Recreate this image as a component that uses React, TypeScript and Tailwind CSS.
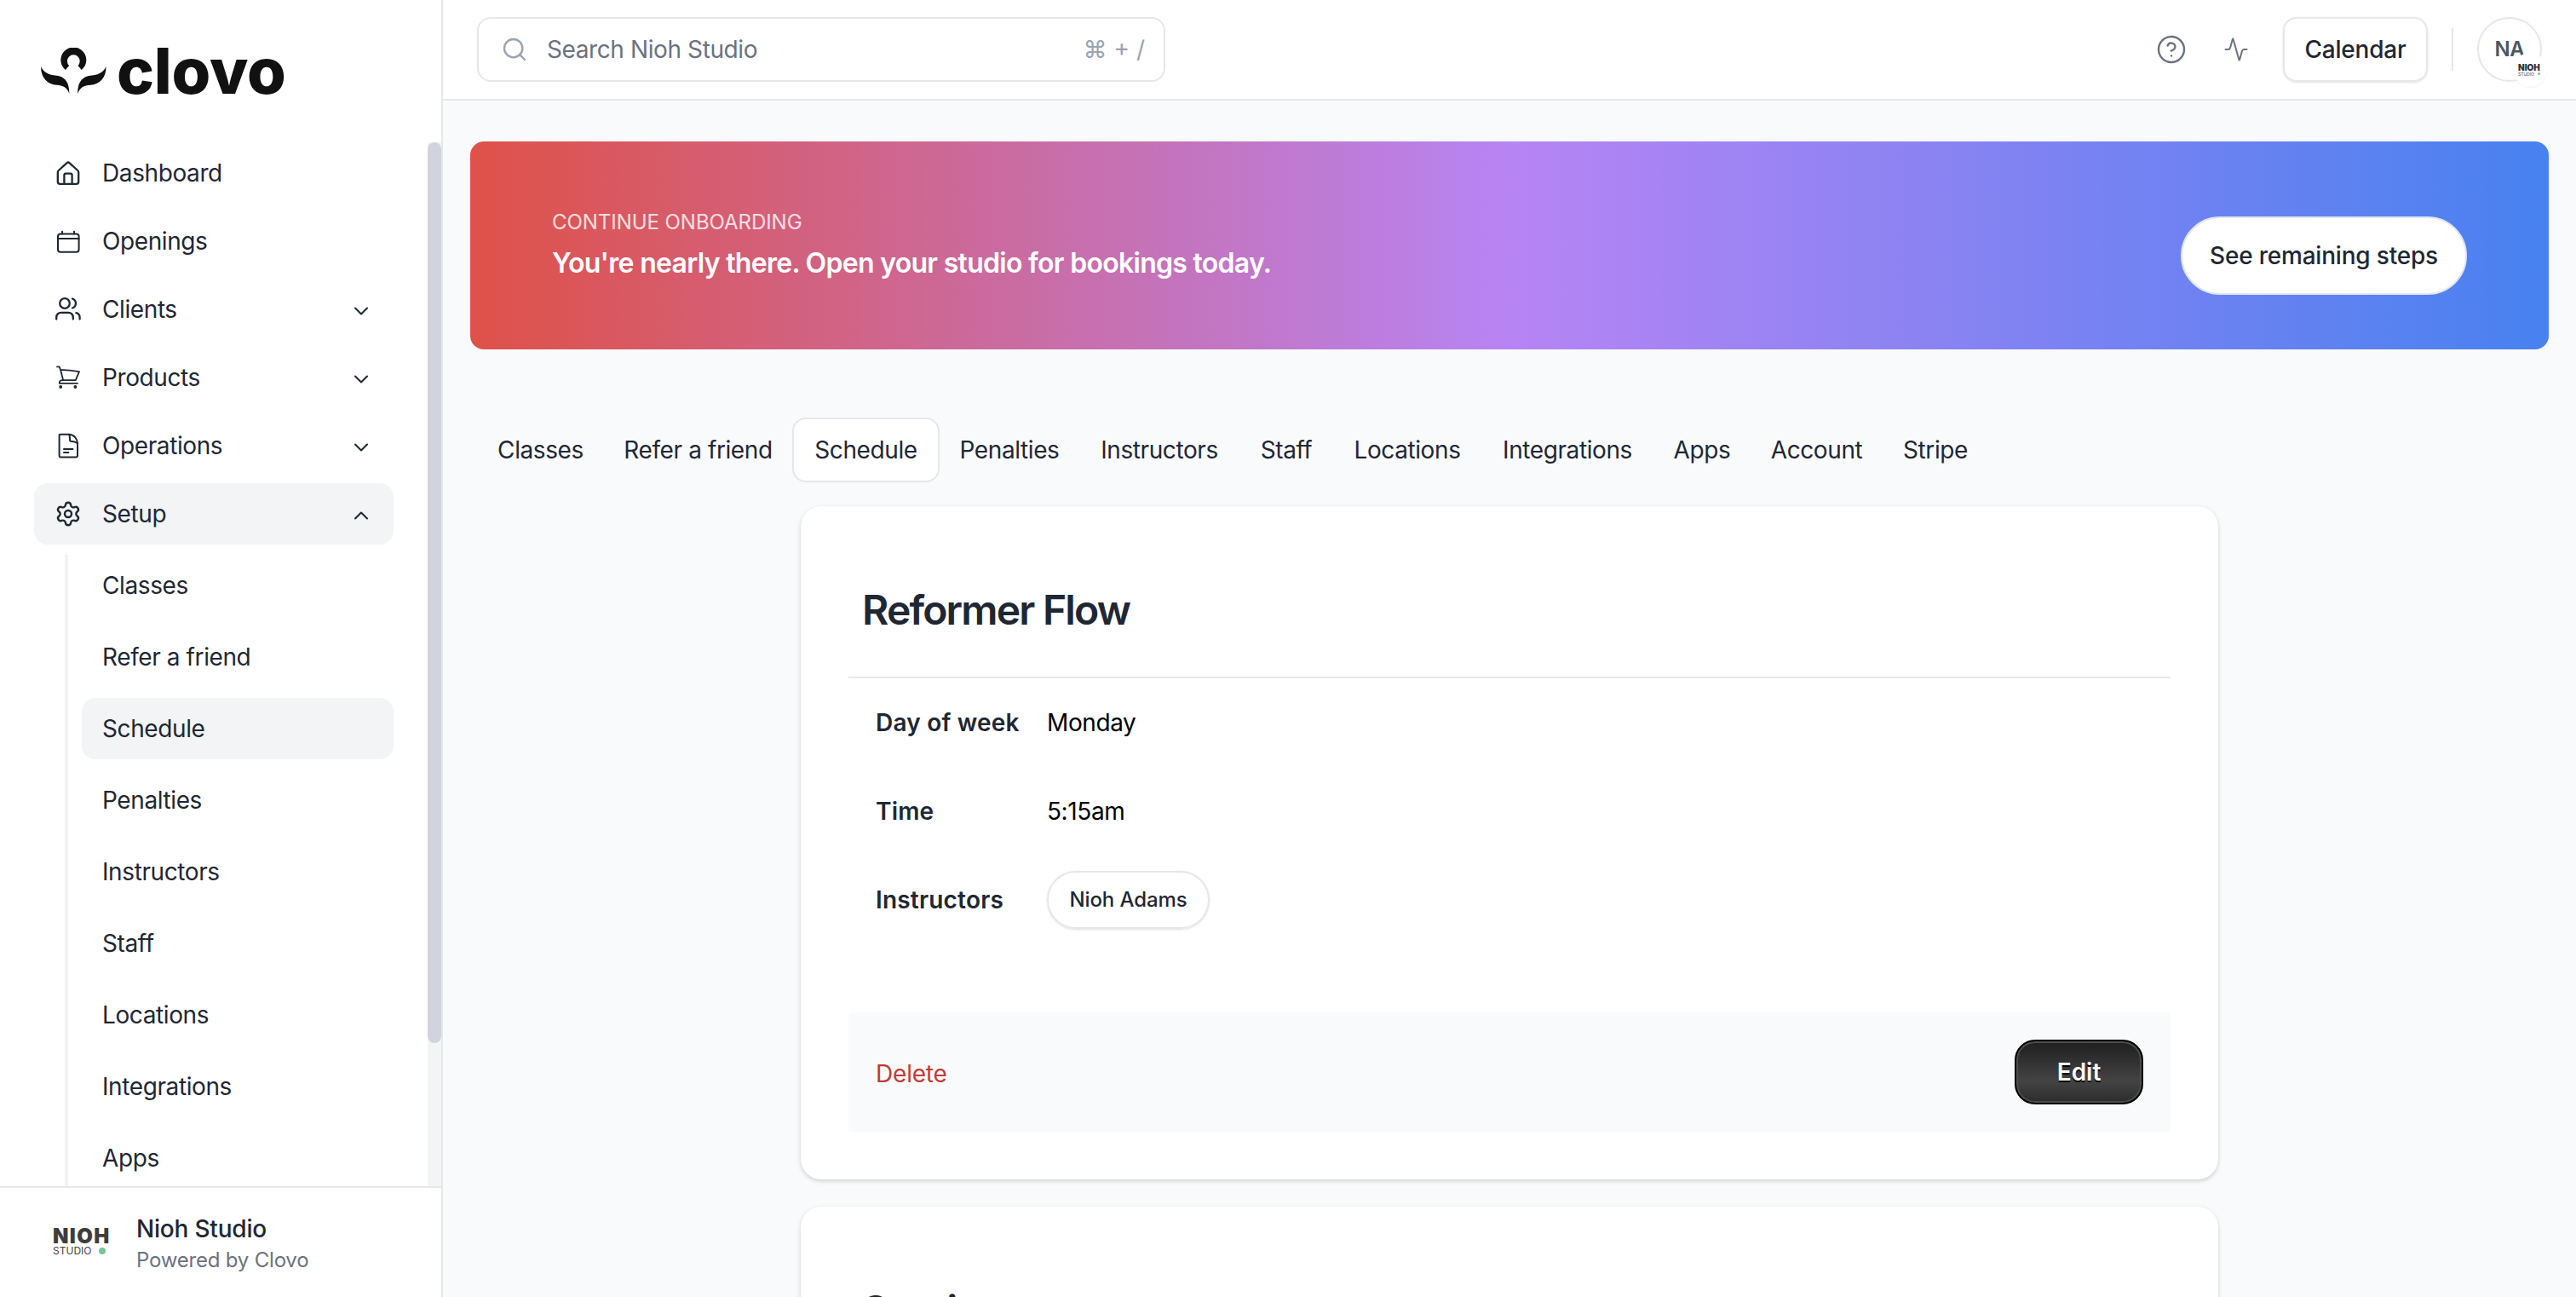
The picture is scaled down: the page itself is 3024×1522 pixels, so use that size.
import {
  Activity,
  ChevronDown,
  ChevronUp,
  CircleHelp,
  Search,
  Settings,
} from "lucide-react";
import type { ReactNode } from "react";

const setupPages = [
  { name: "Classes", tab: "w-[149px]" },
  { name: "Refer a friend", tab: "w-[221px]" },
  { name: "Schedule", tab: "w-[173px]" },
  { name: "Penalties", tab: "w-[164px]" },
  { name: "Instructors", tab: "w-[188px]" },
  { name: "Staff", tab: "w-[110px]" },
  { name: "Locations", tab: "w-[174px]" },
  { name: "Integrations", tab: "w-[202px]" },
  { name: "Apps", tab: "w-[114px]" },
  { name: "Account", tab: "w-[155px]" },
  { name: "Stripe", tab: "w-[124px]" },
];

const current = "Schedule";

function Icon({ children, width }: { children: ReactNode; width: number }) {
  return (
    <svg
      viewBox="0 0 32 32"
      className="size-8 shrink-0"
      fill="none"
      stroke="currentColor"
      strokeWidth={width}
      strokeLinecap="round"
      strokeLinejoin="round"
    >
      {children}
    </svg>
  );
}

function HomeIcon() {
  return (
    <Icon width={2.3}>
      <path d="M3.8 15.2a3 3 0 0 1 1-2.2L14.6 4.2a2 2 0 0 1 2.8 0L27.2 13a3 3 0 0 1 1 2.2v11a2.6 2.6 0 0 1-2.6 2.6H6.4a2.6 2.6 0 0 1-2.6-2.6z" />
      <path d="M11.4 28.6V18.4a1.8 1.8 0 0 1 1.8-1.8h5.6a1.8 1.8 0 0 1 1.8 1.8v10.2" />
    </Icon>
  );
}

function CalendarIcon() {
  return (
    <Icon width={2}>
      <rect x="4" y="7.5" width="24.6" height="21.2" rx="3" />
      <path d="M4 13h24.6M9 4.8v2.7M23 4.8v2.7" />
    </Icon>
  );
}

function ClientsIcon() {
  return (
    <Icon width={2.3}>
      <circle cx="12" cy="9" r="5.8" />
      <path d="M2.2 27.5v-2.3a5.4 5.4 0 0 1 5.4-5.4h8.8a5.4 5.4 0 0 1 5.4 5.4v2.3" />
      <path d="M21 3.5a5.8 5.8 0 0 1 0 11M25.4 20.2a5.4 5.4 0 0 1 4.2 5.2v2.1" />
    </Icon>
  );
}

function CartIcon() {
  return (
    <Icon width={1.8}>
      <path d="M3 3.4h2.6l1.4 3.4 3.2 12.4h14.6L29 9.2Q18 7 7 6.8" />
      <path d="M10 19.2H8.6a3 3 0 0 0-2.8 3.6H27" />
      <circle cx="7.2" cy="27" r="1" fill="currentColor" />
      <circle cx="24.4" cy="27" r="1" fill="currentColor" />
    </Icon>
  );
}

function DocumentIcon() {
  return (
    <Icon width={2}>
      <path d="M6.6 2.8h10.2C22.8 2.8 27 8 27 13.4v14a2 2 0 0 1-2 2H7.6a2 2 0 0 1-2-2V3.8a1 1 0 0 1 1-1z" />
      <path d="M17 2.8c1 1.4 1 3.4 1 6.2a2 2 0 0 0 2 2c3.4 0 5.4.6 6.8 2.2M11 20h10.4M11 24h5.4" />
    </Icon>
  );
}

function ClovoLogo() {
  return (
    <div className="flex h-[54px] items-start text-[#111]">
      <svg viewBox="0 0 77 54" className="h-[54px] w-[77px] shrink-0" fill="currentColor">
        <path d="M28.9 26.1A15 15 0 1 1 47.7 26.1L43.5 20.9A7.4 7.4 0 1 0 33.1 20.9Z" />
        <path d="M0 22C2 27 7 31.5 16.5 32.5C27 33.5 33.4 38.5 33.4 54C31 47 26 44 18.5 43.8C8 43 0 36 0 22Z" />
        <path d="M76.6 22C74.6 27 69.6 31.5 60.1 32.5C49.6 33.5 43.2 38.5 43.2 54C45.6 47 50.6 44 58.1 43.8C68.6 43 76.6 36 76.6 22Z" />
      </svg>
      <span className="ml-3 text-[74px] leading-[54px] font-extrabold tracking-[-0.2px]">clovo</span>
    </div>
  );
}

function NavItem({ icon, label, open }: { icon: ReactNode; label: string; open?: boolean }) {
  return (
    <div className={`flex h-[72px] w-[422px] shrink-0 items-center rounded-2xl px-6 ${open ? "bg-[#f2f4f5]" : ""}`}>
      {icon}
      <span className="ml-6 flex-1">{label}</span>
      {open === true && <ChevronUp className="mt-1 size-7" strokeWidth={1.8} />}
      {open === false && <ChevronDown className="mt-1 size-7" strokeWidth={1.8} />}
    </div>
  );
}

function Sidebar() {
  return (
    <aside className="flex w-[520px] shrink-0 flex-col border-r-2 border-[#e6e7e9] bg-white">
      <div className="h-[167px] shrink-0 pt-14 pl-12">
        <ClovoLogo />
      </div>
      <div className="flex min-h-0 flex-1">
        <nav className="flex flex-1 flex-col gap-2 overflow-hidden pl-10">
          <NavItem icon={<HomeIcon />} label="Dashboard" />
          <NavItem icon={<CalendarIcon />} label="Openings" />
          <NavItem icon={<ClientsIcon />} label="Clients" open={false} />
          <NavItem icon={<CartIcon />} label="Products" open={false} />
          <NavItem icon={<DocumentIcon />} label="Operations" open={false} />
          <NavItem icon={<Settings className="size-8" strokeWidth={1.8} />} label="Setup" open />
          <div className="mt-1 ml-9 flex w-[386px] shrink-0 flex-col gap-3 border-l-4 border-[#f2f3f4] pl-4">
            {setupPages.slice(0, 9).map((page) => (
              <div
                key={page.name}
                className={`flex h-[72px] shrink-0 items-center rounded-2xl px-6 ${page.name === current ? "bg-[#f2f4f5]" : ""}`}
              >
                {page.name}
              </div>
            ))}
          </div>
        </nav>
        <div className="w-4 bg-[#f3f4f6]">
          <div className="h-[1057px] rounded-full bg-[#d1d4dc]" />
        </div>
      </div>
      <div className="flex h-[130px] shrink-0 items-center border-t-2 border-[#e6e7e9] pl-[62px]">
        <div className="w-[66px]">
          <div className="text-2xl leading-5 font-black tracking-[1.4px] text-[#3d3d3d]">NIOH</div>
          <div className="flex items-center justify-between pr-1 text-[12px] leading-[14px] tracking-normal text-[#444]">
            <span>STUDIO</span>
            <span className="size-2 rounded-full bg-[#78c596]" />
          </div>
        </div>
        <div className="mt-1 ml-8">
          <div className="leading-[38px] font-medium tracking-[-0.2px]">Nioh Studio</div>
          <div className="text-2xl leading-9 tracking-[-0.2px] text-[#6b7280]">Powered by Clovo</div>
        </div>
      </div>
    </aside>
  );
}

function Header() {
  return (
    <header className="flex h-[118px] shrink-0 items-center border-b-2 border-[#e6e7e9] bg-white px-10">
      <div className="flex h-[76px] w-[808px] items-center rounded-2xl border-2 border-[#e6e7e9] pr-[22px] pl-[26px]">
        <Search className="size-8 text-[#9ca3af]" strokeWidth={1.8} />
        <span className="ml-[22px] flex-1 text-[#6b7280]">Search Nioh Studio</span>
        <span className="tracking-normal text-[#9ca3af]">⌘ + /</span>
      </div>
      <div className="ml-auto flex items-center">
        <CircleHelp className="size-9 text-[#6b7280]" strokeWidth={1.6} />
        <Activity className="ml-[43px] size-[30px] text-[#6b7280]" strokeWidth={1.6} />
        <button className="ml-10 h-[76px] w-[170px] rounded-2xl border-2 border-[#e6e7e9] font-medium tracking-[-0.2px] shadow-sm">
          Calendar
        </button>
        <div className="ml-7 h-[50px] w-0.5 bg-[#e6e7e9]" />
        <div className="relative ml-7 flex size-[76px] items-center justify-center rounded-full border-2 border-[#e6e7e9] text-2xl font-semibold text-[#4b5563]">
          <span>NA</span>
          <div className="absolute -right-2 -bottom-2 flex size-10 flex-col justify-center rounded-full bg-white pl-1.5 shadow-xs">
            <div className="text-[10px] leading-[9px] font-black tracking-normal text-[#333]">NIOH</div>
            <div className="flex items-center text-[5px] leading-[6px] font-normal tracking-normal text-[#444]">
              STUDIO
              <span className="ml-1 size-[3px] rounded-full bg-[#78c596]" />
            </div>
          </div>
        </div>
      </div>
    </header>
  );
}

function OnboardingBanner() {
  return (
    <div className="flex h-[244px] shrink-0 items-center justify-between rounded-2xl bg-linear-to-r/srgb from-[#df5148] via-[#b784f4] to-[#4881f0] px-24 text-white">
      <div>
        <div className="text-2xl leading-9 tracking-[-0.05px] text-white/80">CONTINUE ONBOARDING</div>
        <div className="mt-1.5 text-[32px] leading-[48px] font-semibold tracking-[-0.71px]">
          You're nearly there. Open your studio for bookings today.
        </div>
      </div>
      <button className="mt-6 h-[92px] w-[336px] rounded-full border-2 border-[#e1e6f4] bg-white font-medium tracking-[-0.2px] text-[#1f2733]">
        See remaining steps
      </button>
    </div>
  );
}

function Row({ label, children }: { label: string; children: ReactNode }) {
  return (
    <div className="flex h-[104px] items-center pl-8">
      <div className="w-[201px] font-semibold tracking-[0.2px]">{label}</div>
      <div className="text-black">{children}</div>
    </div>
  );
}

function ClassCard() {
  return (
    <section className="h-[790px] rounded-3xl bg-white px-14 pt-[92px] shadow-[0_2px_6px_rgba(0,0,0,0.1),0_2px_4px_rgba(0,0,0,0.08)]">
      <h1 className="pl-4 text-[48px] leading-[60px] font-semibold tracking-[-1.8px]">Reformer Flow</h1>
      <div className="mt-12 h-0.5 bg-[#e6e7e9]" />
      <Row label="Day of week">Monday</Row>
      <Row label="Time">5:15am</Row>
      <Row label="Instructors">
        <div className="flex h-[68px] w-[191px] items-center justify-center rounded-full border-2 border-[#e6e7e9] text-2xl font-medium tracking-[-0.1px] text-[#1f2733] shadow-sm">
          Nioh Adams
        </div>
      </Row>
      <div className="mt-20 flex h-[140px] items-center justify-between rounded bg-[#f9fafb] px-8">
        <a className="mt-1 tracking-[-0.2px] text-[#c23a35]">Delete</a>
        <button className="h-[76px] w-[151px] rounded-3xl border-2 border-black bg-linear-to-b from-[#1f1f1f] via-[#444] via-65% to-[#2b2b2b] font-semibold tracking-normal text-white shadow-[inset_0_0_0_2px_#4d4d4d] [text-shadow:0_2px_0_#000]">
          Edit
        </button>
      </div>
    </section>
  );
}

export default function App() {
  return (
    <div className="flex h-[1522px] w-[3024px] overflow-hidden bg-[#f9fafb] font-['Inter',sans-serif] text-[28px] tracking-[-0.4px] text-[#1f2733]">
      <Sidebar />
      <div className="flex min-w-0 flex-1 flex-col">
        <Header />
        <main className="flex min-h-0 flex-1 flex-col px-8 pt-12">
          <OnboardingBanner />
          <div className="mt-20 flex h-[76px] shrink-0 pl-2">
            {setupPages.map((page) => (
              <div
                key={page.name}
                className={`flex shrink-0 items-center justify-center rounded-2xl whitespace-nowrap ${page.tab} ${
                  page.name === current ? "border-2 border-[#e6e7e9] bg-white" : ""
                }`}
              >
                {page.name}
              </div>
            ))}
          </div>
          <div className="mx-auto mt-7 flex w-[1664px] shrink-0 flex-col gap-8">
            <ClassCard />
            <section className="h-[400px] rounded-3xl bg-white px-14 pt-[92px] shadow-[0_2px_6px_rgba(0,0,0,0.1),0_2px_4px_rgba(0,0,0,0.08)]">
              <h2 className="pl-4 text-[48px] leading-[60px] font-semibold tracking-[-3.2px]">Session</h2>
            </section>
          </div>
        </main>
      </div>
    </div>
  );
}
